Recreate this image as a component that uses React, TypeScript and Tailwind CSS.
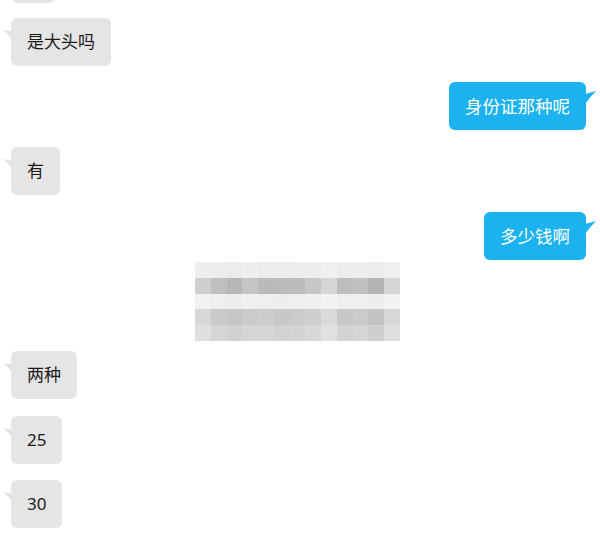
import React from "react";

const font = {
  fontFamily: '"Noto Sans", "Noto Sans CJK SC", sans-serif',
};

// mosaic cells of the blurred picture, row by row
const mosaic: string[][] = [
  ["bg-[#eeeeee]", "bg-[#ededed]", "bg-[#ececec]", "bg-[#eeeeee]", "bg-[#ececec]", "bg-[#ececec]", "bg-[#ededed]", "bg-[#eeeeee]", "bg-[#f0f0f0]", "bg-[#ededed]", "bg-[#eeeeee]", "bg-[#ececec]", "bg-[#f0f0f0]"],
  ["bg-[#cfcfcf]", "bg-[#bfbfbf]", "bg-[#b7b7b7]", "bg-[#c5c5c5]", "bg-[#bababa]", "bg-[#bbbbbb]", "bg-[#bcbcbc]", "bg-[#c7c7c7]", "bg-[#d6d6d6]", "bg-[#bdbdbd]", "bg-[#c1c1c1]", "bg-[#b4b4b4]", "bg-[#d5d5d5]"],
  ["bg-[#f1f1f1]", "bg-[#efefef]", "bg-[#eeeeee]", "bg-[#f0f0f0]", "bg-[#efefef]", "bg-[#eeeeee]", "bg-[#efefef]", "bg-[#f0f0f0]", "bg-[#f2f2f2]", "bg-[#efefef]", "bg-[#f0f0f0]", "bg-[#eeeeee]", "bg-[#f2f2f2]"],
  ["bg-[#d8d8d8]", "bg-[#cacaca]", "bg-[#c6c6c6]", "bg-[#cbcbcb]", "bg-[#cdcdcd]", "bg-[#c8c8c8]", "bg-[#cbcbcb]", "bg-[#cfcfcf]", "bg-[#dadada]", "bg-[#c8c8c8]", "bg-[#cbcbcb]", "bg-[#c3c3c3]", "bg-[#d7d7d7]"],
  ["bg-[#dfdfdf]", "bg-[#d5d5d5]", "bg-[#d1d1d1]", "bg-[#d5d5d5]", "bg-[#d6d6d6]", "bg-[#d2d2d2]", "bg-[#d4d4d4]", "bg-[#d7d7d7]", "bg-[#e1e1e1]", "bg-[#d3d3d3]", "bg-[#d5d5d5]", "bg-[#cfcfcf]", "bg-[#dedede]"],
];

function Left({ text, className = "" }: { text: string; className?: string }) {
  return (
    <div className={`flex pl-[11px] ${className}`}>
      <div className="relative h-12 rounded-md bg-[#e5e5e5] px-4 flex items-center text-[17px] text-[#1a1a1a]">
        <svg
          className="absolute left-[-8px] top-[12px]"
          width="9"
          height="9"
          viewBox="0 0 9 9"
        >
          <path d="M9 1.5 Q4 0.5 0 0 Q5 4 9 8.5 Z" fill="#e2e2e2" />
        </svg>
        {text}
      </div>
    </div>
  );
}

function Right({ text, className = "" }: { text: string; className?: string }) {
  return (
    <div className={`flex justify-end pr-[14px] ${className}`}>
      <div className="relative h-12 rounded-md bg-[#1cb2ef] px-4 flex items-center text-[17.5px] text-white">
        <svg
          className="absolute right-[-10px] top-[9px]"
          width="11"
          height="14"
          viewBox="0 0 11 14"
        >
          <path d="M0 3 L11 0 Q5 6 0 13 Z" fill="#1cb2ef" />
        </svg>
        {text}
      </div>
    </div>
  );
}

export default function App() {
  return (
    <div className="w-[600px] h-[545px] overflow-hidden bg-white" style={font}>
      <div className="flex flex-col">
        <div className="flex pl-[12px] mt-[-45px]">
          <div className="h-12 w-[43px] rounded-md bg-[#e5e5e5]" />
        </div>
        <Left text="是大头吗" className="mt-[15px]" />
        <Right text="身份证那种呢" className="mt-4" />
        <Left text="有" className="mt-[17px]" />
        <Right text="多少钱啊" className="mt-[17px]" />
        <div className="flex pl-[195px] mt-[2px]">
          <div className="flex flex-col">
            {mosaic.map((row, i) => (
              <div key={i} className="flex">
                {row.map((c, j) => (
                  <div key={j} className={`w-[15.75px] h-[15.8px] ${c}`} />
                ))}
              </div>
            ))}
          </div>
        </div>
        <Left text="两种" className="mt-[10px]" />
        <Left text="25" className="mt-[17px]" />
        <Left text="30" className="mt-4" />
      </div>
    </div>
  );
}
